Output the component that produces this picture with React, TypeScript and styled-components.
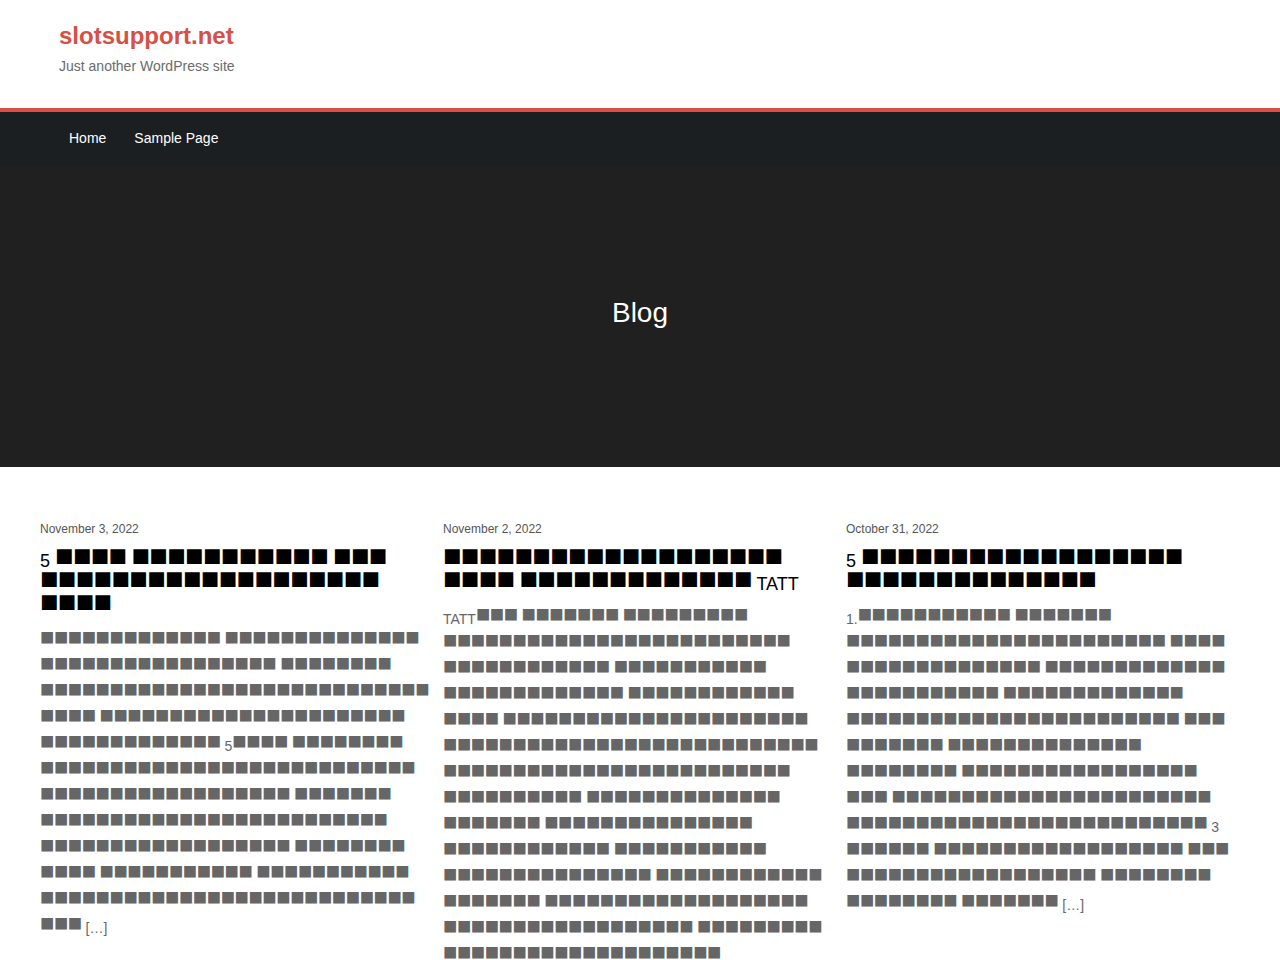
import styled, { createGlobalStyle } from 'styled-components'

const GlobalStyle = createGlobalStyle`
  body {
    margin: 0;
    background: #fff;
    font-family: "Liberation Sans", Arial, sans-serif;
  }
`

// Thai text; the reference page had no Thai font, so it showed as solid boxes
const pool =
  'สลอตเวบตรงแตกงายไมผานเอเยนตเลนงายไดเงนจรงสมครสมาชกใหมรบโบนสฟรทกวนคาสโนออนไลนยอดนยมอนดบหนงของไทย'

let cursor = 0
const thai = (n: number) => {
  let out = ''
  for (let i = 0; i < n; i++) {
    out += pool[cursor % pool.length]
    cursor++
  }
  return out
}

// a line spec: "#12" is a Thai run of 12 letters, the rest is literal text
const Line = ({ spec }: { spec: string }) => {
  const parts = spec.split(/(#\d+)/).filter(Boolean)
  return (
    <>
      {parts.map((p, i) =>
        p.startsWith('#') ? <Thai key={i} lang='th'>{thai(Number(p.slice(1)))}</Thai> : <span key={i}>{p}</span>
      )}
    </>
  )
}

const Lines = ({ items }: { items: string[] }) => (
  <>
    {items.map((t, i) => (
      <span key={i}>
        <Line spec={t} />
        {i < items.length - 1 && <br />}
      </span>
    ))}
  </>
)

type Post = {
  date: string
  title: string[]
  excerpt: string[]
}

const posts: Post[] = [
  {
    date: 'November 3, 2022',
    title: ['5 #4 #11 #3', '#19', '#4'],
    excerpt: [
      '#13 #14',
      '#17 #8',
      '#28',
      '#4 #22',
      '#13 5#4 #8',
      '#27',
      '#18 #7',
      '#25',
      '#18 #8',
      '#4 #11 #11',
      '#27',
      '#3 […]',
    ],
  },
  {
    date: 'November 2, 2022',
    title: ['#19', '#4 #13 TATT'],
    excerpt: [
      'TATT#3 #7 #9',
      '#25',
      '#12 #11',
      '#13 #12',
      '#4 #22',
      '#27',
      '#25',
      '#10 #14',
      '#7 #15',
      '#12 #11',
      '#15 #12',
      '#7 #19',
      '#18 #9',
      '#20',
      '#9 #12',
      '#6 […]',
    ],
  },
  {
    date: 'October 31, 2022',
    title: ['5 #18', '#14'],
    excerpt: [
      '1.#11 #7',
      '#23 #4',
      '#14 #13',
      '#11 #13',
      '#24 #3',
      '#7 #14',
      '#8 #17',
      '#3 #23',
      '#26 3',
      '#6 #18 #3',
      '#18 #8',
      '#8 #7 […]',
    ],
  },
]

const App = () => {
  return (
    <>
      <GlobalStyle />
      <Header>
        <SiteTitle href='#'>slotsupport.net</SiteTitle>
        <Tagline>Just another WordPress site</Tagline>
      </Header>
      <NavBar>
        <NavList>
          <NavLink href='#'>Home</NavLink>
          <NavLink href='#'>Sample Page</NavLink>
        </NavList>
      </NavBar>
      <Hero>
        <HeroTitle>Blog</HeroTitle>
      </Hero>
      <Posts>
        {posts.map(post => (
          <Article key={post.date}>
            <PostDate>{post.date}</PostDate>
            <PostTitle>
              <Lines items={post.title} />
            </PostTitle>
            <Excerpt>
              <Lines items={post.excerpt} />
            </Excerpt>
          </Article>
        ))}
      </Posts>
    </>
  )
}

export default App


// shown masked as squares, as the reference shows its missing Thai glyphs
const Thai = styled.span`
    -webkit-text-security: square;
    font-size: 1.7em;
    letter-spacing: -0.02em;
    line-height: 0;
    vertical-align: 2px;
`

const Header = styled.header`
    display: flex;
    flex-direction: column;
    align-items: flex-start;
    padding: 18px 59px 31px;
    height: 59px;
    border-bottom: 4px solid #d65045;
`

const SiteTitle = styled.a`
    font-size: 24px;
    line-height: 36px;
    font-weight: 700;
    color: #d65045;
    text-decoration: none;
`

const Tagline = styled.div`
    margin-top: 2px;
    font-size: 14px;
    line-height: 20px;
    color: #6b6b6b;
`

const NavBar = styled.nav`
    background: #1c1f22;
    height: 54px;
    padding: 0 55px;
`

const NavList = styled.div`
    display: flex;
    height: 100%;
`

const NavLink = styled.a`
    display: flex;
    align-items: center;
    padding: 0 14px 2px;
    font-size: 14px;
    color: #fff;
    text-decoration: none;
`

const Hero = styled.section`
    height: 301px;
    box-sizing: border-box;
    padding-bottom: 8px;
    background: #202020;
    display: flex;
    align-items: center;
    justify-content: center;
`

const HeroTitle = styled.h1`
    margin: 0;
    font-size: 28px;
    font-weight: 400;
    color: #fff;
`

const Posts = styled.main`
    display: grid;
    grid-template-columns: repeat(3, 394px);
    column-gap: 9px;
    padding: 53px 40px 0;
`

const Article = styled.article`
    display: flex;
    flex-direction: column;
`

const PostDate = styled.div`
    font-size: 12px;
    line-height: 18px;
    color: #555;
`

const PostTitle = styled.h2`
    margin: 12px 0 0;
    font-size: 18px;
    line-height: 23px;
    font-weight: 400;
    color: #000;
    white-space: nowrap;

    ${Thai} {
        vertical-align: 1px;
    }
`

const Excerpt = styled.p`
    margin: 10px 0 0;
    font-size: 14px;
    line-height: 26px;
    color: #666;
    white-space: nowrap;
`
